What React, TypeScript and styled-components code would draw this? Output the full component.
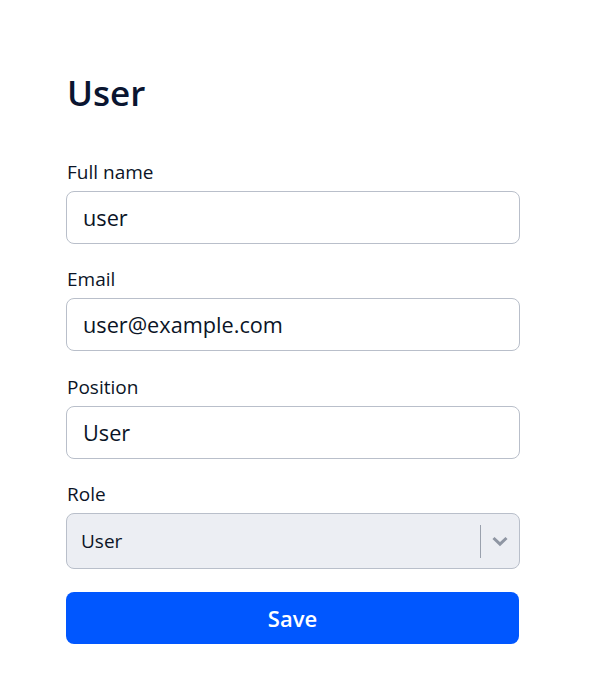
import styled, { createGlobalStyle } from "styled-components";

const GlobalStyle = createGlobalStyle`
  body {
    margin: 0;
    background: #ffffff;
    font-family: "Open Sans", "Noto Sans", sans-serif;
    color: #0b1426;
  }
`;

const Page = styled.div`
  padding: 70px 0 40px 66px;
`;

const Form = styled.form`
  width: 454px;
  display: flex;
  flex-direction: column;
`;

const Title = styled.h1`
  margin: 0 0 43px 1px;
  font-size: 35px;
  font-weight: 600;
  line-height: 46px;
  color: #0a1530;
`;

const Field = styled.div`
  display: flex;
  flex-direction: column;
  margin-bottom: 22.4px;
`;

const Label = styled.label`
  font-size: 19px;
  line-height: 26px;
  margin: 0 0 6px 1px;
  color: #0b1426;
`;

const Input = styled.input`
  box-sizing: border-box;
  height: 53px;
  width: 100%;
  padding: 0 16px;
  border: 1px solid #b9bfca;
  border-radius: 8px;
  font-family: inherit;
  font-size: 21.7px;
  color: #0b1426;
  background: #ffffff;
  outline: none;
`;

const SelectBox = styled.div`
  box-sizing: border-box;
  height: 56px;
  display: flex;
  align-items: center;
  border: 1px solid #b9bfca;
  border-radius: 8px;
  background: #eceef3;
`;

const SelectValue = styled.span`
  flex: 1;
  padding-left: 14px;
  font-size: 19px;
  color: #0b1426;
`;

const Divider = styled.span`
  width: 1px;
  height: 33px;
  background: #9aa1ad;
`;

const Chevron = styled.span`
  width: 38px;
  display: flex;
  justify-content: center;
  align-items: center;
  color: #8f96a3;
`;

const SaveButton = styled.button`
  height: 52px;
  width: 453px;
  border: none;
  border-radius: 8px;
  background: #0057ff;
  color: #ffffff;
  font-family: inherit;
  font-size: 22px;
  font-weight: 600;
  cursor: pointer;
`;

export default function App() {
  return (
    <>
      <GlobalStyle />
      <Page>
        <Form onSubmit={(e) => e.preventDefault()}>
          <Title>User</Title>
          <Field>
            <Label>Full name</Label>
            <Input defaultValue="user" />
          </Field>
          <Field>
            <Label>Email</Label>
            <Input defaultValue="user@example.com" />
          </Field>
          <Field>
            <Label>Position</Label>
            <Input defaultValue="User" />
          </Field>
          <Field>
            <Label>Role</Label>
            <SelectBox>
              <SelectValue>User</SelectValue>
              <Divider />
              <Chevron>
                <svg width="20" height="20" viewBox="0 0 20 20" fill="none" stroke="currentColor" strokeWidth="3">
                  <path d="M3.5 7l6.5 6.2L16.5 7" />
                </svg>
              </Chevron>
            </SelectBox>
          </Field>
          <SaveButton type="submit">Save</SaveButton>
        </Form>
      </Page>
    </>
  );
}
